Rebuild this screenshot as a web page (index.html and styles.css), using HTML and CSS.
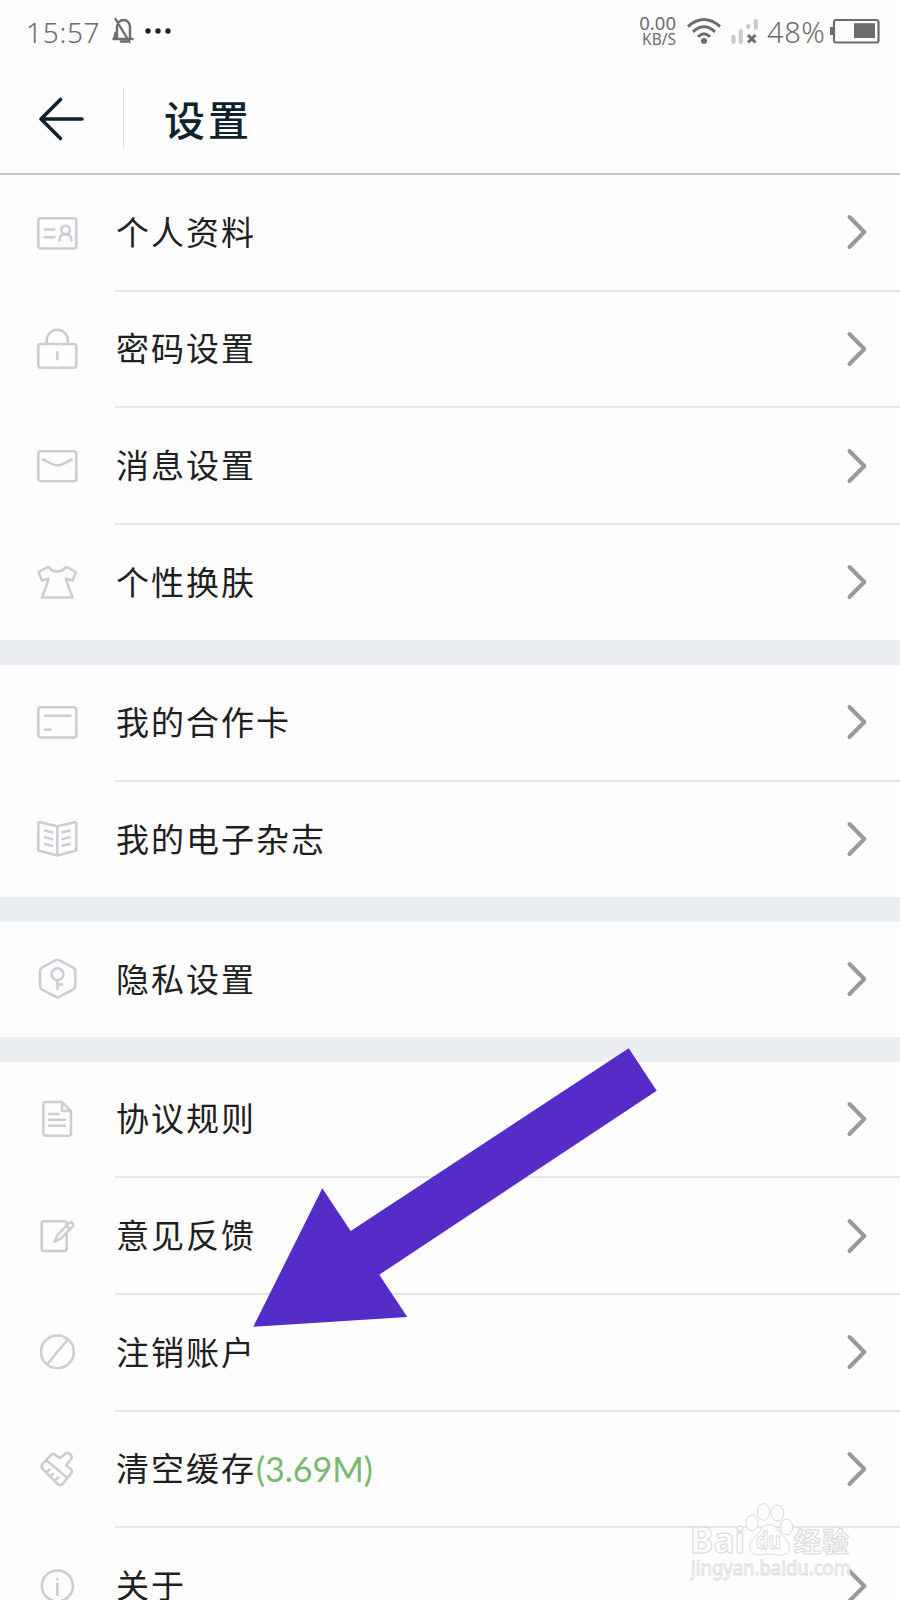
FILE: index.html
```html
<!DOCTYPE html>
<html lang="zh-CN">
<head>
<meta charset="utf-8">
<title>设置</title>
<link rel="stylesheet" href="styles.css">
</head>
<body>
<svg width="0" height="0" class="defs">
  <symbol id="chev" viewBox="0 0 24 40"><path d="M4.5 5 19.3 20 4.5 35"/></symbol>
</svg>
<div class="screen">
  <div class="status">
    <span class="time">15:57</span>
    <svg class="bell" width="22" height="28" viewBox="0 0 22 28"><path d="M5 22V10a6.5 7 0 0 1 13 0V22M1.500 22H20.500M3.500 2 17.500 25M3.500 16 2 22"/><path d="M9 24.500h6"/></svg>
    <svg class="dots" width="28" height="8" viewBox="0 0 28 8"><circle cx="4" cy="4" r="2.700"/><circle cx="14" cy="4" r="2.700"/><circle cx="24" cy="4" r="2.700"/></svg>
    <span class="spacer"></span>
    <span class="speed"><span class="rate">0.00</span><span class="unit">KB/S</span></span>
    <svg class="wifi" width="36" height="28" viewBox="0 0 36 28"><path d="M2 9.500Q18-4.500 34 9.500M7 14.800Q18 4.800 29 14.800M12 19.800Q18 13.800 24 19.800"/><circle cx="18" cy="24" r="3"/></svg>
    <svg class="signal" width="28" height="28" viewBox="0 0 28 28"><path class="bars" d="M2.500 19.500v5.500M9.800 14v11M17.300 9v1M24.800 4v7"/><path class="cross" d="M17 18l7.500 7.500M24.500 18 17 25.500"/></svg>
    <span class="percent">48%</span>
    <svg class="battery" width="50" height="26" viewBox="0 0 50 26"><path class="nub" d="M0 9h4v8H0z"/><rect class="shell" x="4" y="2" width="44.500" height="22.500" rx="2"/><path class="charge" d="M24 5.200h21v14.800H24z"/></svg>
  </div>
  <header class="header">
    <svg class="back" width="50" height="50" viewBox="0 0 50 50"><path d="M24.500 5.500 5 25 24.500 44.500M6 25H46"/></svg>
    <span class="rule"></span>
    <h1 class="title">设置</h1>
  </header>

  <div class="group">
    <div class="row">
      <svg class="icon" viewBox="0 0 48 48"><rect x="5.300" y="9.200" width="38" height="30.300" rx="2.500"/><path d="M11.700 20.500h9.600M11.700 28.200h9.600M26.500 31.500c0-4 2.500-6.200 6-6.200s6 2.200 6 6.200"/><circle cx="32.600" cy="21" r="4.300"/></svg>
      <div class="cell"><span class="label">个人资料</span><svg class="chev"><use href="#chev"/></svg></div>
    </div>
    <div class="row">
      <svg class="icon" viewBox="0 0 48 48"><rect x="5.300" y="19.100" width="38" height="23.700" rx="2.500"/><path d="M13.700 19V15.400a10.600 10.600 0 0 1 21.200 0V19M24.300 27.300v7"/></svg>
      <div class="cell"><span class="label">密码设置</span><svg class="chev"><use href="#chev"/></svg></div>
    </div>
    <div class="row">
      <svg class="icon" viewBox="0 0 48 48"><rect x="5.300" y="9.200" width="38" height="30" rx="2.500"/><path d="M10 17.500C15 19.500 19 23.300 24.300 23.300S33.500 19.500 38.700 17.500"/></svg>
      <div class="cell"><span class="label">消息设置</span><svg class="chev"><use href="#chev"/></svg></div>
    </div>
    <div class="row">
      <svg class="icon" viewBox="0 0 48 48"><path d="M16.500 9.300C18.500 14.800 30 14.800 32 9.300L35 9.500 43 14.300 39.500 22.500 33 20.500C34.500 27 37.500 34 39.700 39.500H8.900C11 34 14 27 15.500 20.500L9 22.500 5.500 14.300 13.500 9.500Z"/></svg>
      <div class="cell"><span class="label">个性换肤</span><svg class="chev"><use href="#chev"/></svg></div>
    </div>
  </div>

  <div class="group">
    <div class="row">
      <svg class="icon" viewBox="0 0 48 48"><rect x="5.300" y="9.200" width="38" height="30.300" rx="2.500"/><path d="M12 17.800h25.500M12 31.800h5.500"/></svg>
      <div class="cell"><span class="label">我的合作卡</span><svg class="chev"><use href="#chev"/></svg></div>
    </div>
    <div class="row">
      <svg class="icon" viewBox="0 0 48 48"><path d="M24.300 11.300 7 7.200Q5.300 7 5.300 8.500V35.500L24.300 40.500 43.300 35.500V8.500Q43.300 7 41.600 7.200ZM24.300 11.300V40.500M12 15.500l7.200 1.800M12 22.300l7.200 1.800M12 29l7.200 1.800M36.600 15.500l-7.200 1.800M36.600 22.300l-7.200 1.800M36.600 29l-7.200 1.800"/></svg>
      <div class="cell"><span class="label">我的电子杂志</span><svg class="chev"><use href="#chev"/></svg></div>
    </div>
  </div>

  <div class="group">
    <div class="row">
      <svg class="icon" viewBox="0 0 48 48"><path d="M22.500 5.300Q24.500 4.200 26.500 5.300L40.500 12.700Q42.300 13.800 42.300 16V31Q42.300 33.200 40.500 34.300L26.500 41.700Q24.500 42.800 22.500 41.700L8.700 34.300Q7 33.200 7 31V16Q7 13.800 8.700 12.700ZM24.500 25.200V34M24.500 29.500h4.500"/><circle cx="24.500" cy="19.200" r="5.900"/></svg>
      <div class="cell"><span class="label">隐私设置</span><svg class="chev"><use href="#chev"/></svg></div>
    </div>
  </div>

  <div class="group">
    <div class="row">
      <svg class="icon" viewBox="0 0 48 48"><path d="M29 7.100H13Q10.300 7.100 10.300 9.800V38Q10.300 40.800 13 40.800H35.300Q38 40.800 38 38V16.100ZM29 7.100V16.100H38M16 19.100h9.500M16 24.800h16M16 30.800h16"/></svg>
      <div class="cell"><span class="label">协议规则</span><svg class="chev"><use href="#chev"/></svg></div>
    </div>
    <div class="row">
      <svg class="icon" viewBox="0 0 48 48"><path d="M33.700 12.500V11.700Q33.700 9.200 31.200 9.200H11.200Q8.700 9.200 8.700 11.700V36.500Q8.700 39 11.200 39H31.200Q33.700 39 33.700 36.500V21.500M21.500 29.700 24 23.500 36 11.200Q38 9.500 39.500 11.200T39.500 14.600L27.500 26.800ZM33.500 14l3.200 3.200"/></svg>
      <div class="cell"><span class="label">意见反馈</span><svg class="chev"><use href="#chev"/></svg></div>
    </div>
    <div class="row">
      <svg class="icon" viewBox="0 0 48 48"><circle cx="24.400" cy="23.800" r="16.400"/><path d="M34.700 11.500 14.300 36.300"/></svg>
      <div class="cell"><span class="label">注销账户</span><svg class="chev"><use href="#chev"/></svg></div>
    </div>
    <div class="row">
      <svg class="icon" viewBox="0 0 48 48"><path d="M9.300 19.300 17.800 10.200Q20 7.800 22.300 9.800L26.600 13.200 32.200 8.800Q34.800 6.800 37.300 9.300T38 14.200L33 20.300 37.800 24Q40 26 38.200 28.500L29.500 39Q27.500 41.300 25 39.300L9.700 24Q7.500 21.800 9.300 19.300ZM13 15 34.500 33M13.500 27.300 16.500 24.500M17.700 31.500 20 29M21.800 35.600 25.300 32.500"/></svg>
      <div class="cell"><span class="label">清空缓存</span><span class="size">(3.69M)</span><svg class="chev"><use href="#chev"/></svg></div>
    </div>
    <div class="row">
      <svg class="icon" viewBox="0 0 48 48"><circle cx="24.400" cy="23.900" r="15.500"/><path d="M24.400 21.500V33M24.400 17v.4"/></svg>
      <div class="cell"><span class="label">关于</span><svg class="chev"><use href="#chev"/></svg></div>
    </div>
  </div>

  <svg class="pointer" width="404" height="280" viewBox="0 0 404 280"><path d="M.3 279.700 69.300 141.300 97.700 184 375.700 1.300 403.700 43.700 126.300 227.700 154.300 270Z"/></svg>

  <svg class="watermark" width="170" height="82" viewBox="0 0 170 82">
    <g class="mark">
      <ellipse cx="66" cy="23" rx="6.200" ry="7.800"/><ellipse cx="77.500" cy="12" rx="6.200" ry="8.300"/><ellipse cx="91.500" cy="13" rx="6.200" ry="8"/><ellipse cx="100.500" cy="27" rx="6.200" ry="7.800"/>
      <path d="M83 24.500c7 0 9 6.500 13 10.500 4.500 4.500 8 8 7.500 13-.8 8-9 7.500-14 6.500-4.500-.8-8.500-.8-13 0-5 1-12 .5-12.800-6.500-.5-5 3-8.500 7.300-13 4-4 5-10.500 12-10.500z"/>
      <text class="bai" x="4" y="53" textLength="55" lengthAdjust="spacingAndGlyphs">Bai</text>
      <text class="du" x="70" y="49" textLength="25" lengthAdjust="spacingAndGlyphs">du</text>
      <text class="exp" x="108" y="52" textLength="55">经验</text>
      <text class="url" x="5" y="75" textLength="160" lengthAdjust="spacingAndGlyphs">jingyan.baidu.com</text>
    </g>
  </svg>
</div>
</body>
</html>
```

FILE: styles.css
```css
* { box-sizing: border-box; }

body { margin: 0; background: #fdfdfd; }

.defs { position: absolute; }

.screen {
  position: relative;
  width: 900px;
  height: 1600px;
  overflow: hidden;
  background: #fdfdfd;
  font-family: "Noto Sans CJK SC", sans-serif;
  color: #1f1f1f;
}

svg { flex: none; fill: none; }

.status {
  display: flex;
  align-items: center;
  height: 62px;
  padding: 0 20px 0 26px;
  font-family: "Noto Sans", sans-serif;
  font-weight: 300;
  color: #6c6c6c;
}
.time { width: 84px; font-size: 28px; line-height: 40px; letter-spacing: .7px; padding-top: 2px; }
.bell { margin: 0 10px 0 2px; stroke: #6c6c6c; stroke-width: 2.4; stroke-linecap: round; }
.dots { fill: #222; }
.spacer { flex: 1; }
.speed {
  display: flex;
  flex-direction: column;
  align-items: flex-end;
  line-height: 17px;
  font-weight: 400;
  margin-right: 10px;
}
.rate { font-size: 18.5px; }
.unit { font-size: 15.5px; }
.wifi { stroke: #6c6c6c; stroke-width: 3; margin-right: 9px; }
.wifi circle { fill: #6c6c6c; stroke: none; }
.signal { margin-right: 8px; }
.bars { stroke: #c9c9c9; stroke-width: 4; stroke-linecap: round; }
.cross { stroke: #6c6c6c; stroke-width: 3; }
.percent { font-size: 29px; line-height: 40px; width: 63px; letter-spacing: .6px; padding-top: 2px; white-space: nowrap; }
.battery .shell { stroke: #6c6c6c; stroke-width: 2.2; }
.battery .nub, .battery .charge { fill: #6c6c6c; }

.header {
  display: flex;
  align-items: center;
  height: 113px;
  padding: 3px 36px 0;
  border-bottom: 2px solid #c8c8c8;
}
.back { stroke: #0c222d; stroke-width: 3.6; stroke-linecap: round; stroke-linejoin: round; }
.rule { width: 1px; height: 60px; margin: 0 40px 0 37px; background: #dedede; }
.title {
  margin: -3px 0 0;
  font-size: 41px;
  line-height: 60px;
  font-weight: 500;
  letter-spacing: 3px;
  color: #0c222d;
}

.group + .group { border-top: 25px solid #ebeff4; }

.row {
  display: flex;
  align-items: stretch;
  height: 116.67px;
  padding-left: 33px;
}
.row:last-child { height: 115px; }
.icon {
  width: 48px;
  height: 48px;
  margin: 33.5px 34px 0 0;
  stroke: #cacdd4;
  stroke-width: 2.5;
  stroke-linecap: round;
  stroke-linejoin: round;
}
.cell {
  flex: 1;
  display: flex;
  align-items: center;
  padding-right: 31px;
  border-bottom: 2px solid #e6e6e7;
}
.row:last-child .cell { border-bottom: 0; }
.label {
  margin-top: -3px;
  padding-left: 1px;
  font-size: 33px;
  line-height: 48px;
  letter-spacing: 2px;
  font-weight: 400;
}
.size { font: 34px/48px Lato, sans-serif; color: #78b972; }
.chev {
  width: 24px;
  height: 40px;
  margin-left: auto;
  stroke: #999;
  stroke-width: 4;
  stroke-linecap: round;
  stroke-linejoin: round;
}

.pointer { position: absolute; left: 253px; top: 1047px; fill: #562cc8; }

.watermark { position: absolute; left: 686px; top: 1500px; }
.mark { fill: #fdfdfd; stroke: #d9d9d9; stroke-width: 1; font-family: "Noto Sans", "Noto Sans CJK SC", sans-serif; }
.bai { font-size: 36px; font-weight: 700; }
.du { font-size: 23px; font-weight: 700; }
.exp { font-size: 27px; font-weight: 700; }
.url { font-size: 19px; stroke-width: .8; }
```
